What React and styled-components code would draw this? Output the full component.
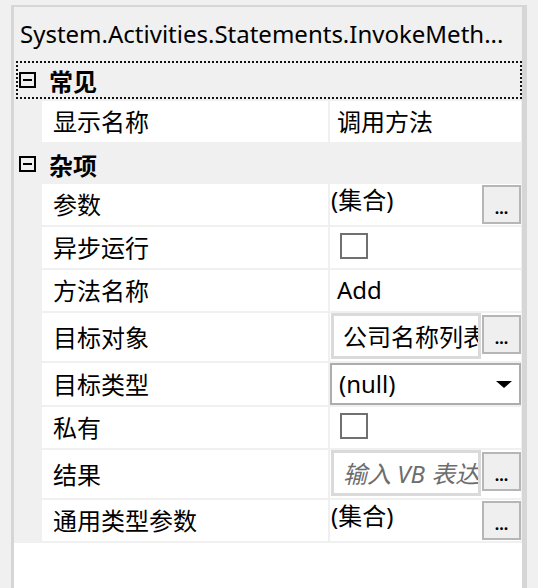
import React from "react";
import styled, { createGlobalStyle } from "styled-components";

const GlobalStyle = createGlobalStyle`
  html, body {
    margin: 0;
    height: 100%;
    background: #f0f0f0;
  }
  #root {
    height: 100%;
  }
`;

const FONT = `"Noto Sans", "Noto Sans CJK SC", sans-serif`;

const Page = styled.div`
  height: 100vh;
  box-sizing: border-box;
  padding: 5px 11px 0 11px;
  display: flex;
  font-family: ${FONT};
  color: #000;
`;

const Frame = styled.div`
  flex: 1;
  display: flex;
  flex-direction: column;
  border-left: 3px solid #d6d6d6;
  border-top: 2px solid #d6d6d6;
  border-right: 5px solid #d6d6d6;
  background: #fff;
  overflow: hidden;
`;

const Header = styled.div`
  height: 54px;
  flex: none;
  display: flex;
  align-items: center;
  padding-left: 6px;
  padding-bottom: 2px;
  box-sizing: border-box;
  background: #f0f0f0;
  font-size: 24px;
  white-space: nowrap;
  overflow: hidden;
`;

const Rows = styled.div`
  display: flex;
  flex-direction: column;
  background: #f0f0f0;
  padding-right: 1px;
`;

const CategoryRow = styled.div`
  box-sizing: border-box;
  height: ${(p) => (p.$focused ? "38px" : "40px")};
  margin: ${(p) => (p.$focused ? "0 -1px 2px 2px" : "0")};
  border: ${(p) => (p.$focused ? "2px dotted #111" : "none")};
  display: flex;
  align-items: center;
  gap: 13px;
  padding-left: ${(p) => (p.$focused ? "1px" : "5px")};
  font-size: 24px;
  font-weight: 700;
`;

const Toggle = styled.span`
  position: relative;
  box-sizing: border-box;
  width: 17px;
  height: 16px;
  border: 2px solid #000;
  flex: none;
  &::after {
    content: "";
    position: absolute;
    left: 2px;
    right: 2px;
    top: 5px;
    height: 2px;
    background: #000;
  }
`;

const PropRow = styled.div`
  display: flex;
  gap: 2px;
  margin-left: 28px;
  margin-bottom: 2px;
  min-height: ${(p) => (p.$tall ? "48px" : "41px")};
`;

const Label = styled.div`
  width: 286px;
  flex: none;
  background: #fff;
  display: flex;
  align-items: center;
  padding-left: 11px;
  padding-bottom: 2px;
  box-sizing: border-box;
  font-size: 24px;
`;

const Value = styled.div`
  flex: 1;
  min-width: 0;
  background: #fff;
  display: flex;
  align-items: ${(p) => (p.$top ? "flex-start" : "center")};
  padding-left: ${(p) => p.$pad ?? 7}px;
  padding-bottom: ${(p) => (p.$top ? 0 : 3)}px;
  box-sizing: border-box;
  font-size: 24px;
  gap: 1px;
`;

const ValueText = styled.span`
  flex: 1;
  white-space: nowrap;
  line-height: ${(p) => (p.$top ? "32px" : "normal")};
`;

const EllipsisButton = styled.div`
  box-sizing: border-box;
  width: 39px;
  height: 39px;
  margin-top: ${(p) => p.$offset ?? 1}px;
  flex: none;
  border: 2px solid #b6b6b6;
  background: #efefef;
  display: flex;
  align-items: flex-end;
  justify-content: center;
  font-size: 16px;
  font-weight: 700;
  line-height: 1;
  padding-bottom: 6px;
`;

const CheckBox = styled.span`
  box-sizing: border-box;
  width: 28px;
  height: 26px;
  border: 2px solid #707070;
  background: #fff;
`;

const TextBox = styled.div`
  box-sizing: border-box;
  flex: 1;
  min-width: 0;
  height: 46px;
  align-self: flex-start;
  border: 3px solid #dadada;
  background: #fff;
  display: flex;
  align-items: center;
  padding-left: 9px;
  padding-bottom: 2px;
  overflow: hidden;
  font-size: 24px;
  color: ${(p) => (p.$placeholder ? "#6d6d6d" : "#000")};
  font-style: ${(p) => (p.$placeholder ? "italic" : "normal")};
`;

const Clip = styled.span`
  display: block;
  flex: 1;
  min-width: 0;
  overflow: hidden;
  white-space: nowrap;
`;

const Combo = styled.div`
  box-sizing: border-box;
  flex: 1;
  height: 42px;
  align-self: flex-start;
  border: 2px solid #adadad;
  display: flex;
  align-items: center;
  justify-content: space-between;
  padding: 0 7px 2px 7px;
  font-size: 24px;
`;

const Arrow = styled.span`
  width: 0;
  height: 0;
  margin-top: 2px;
  border-left: 8px solid transparent;
  border-right: 8px solid transparent;
  border-top: 7px solid #000;
`;

const Filler = styled.div`
  flex: 1;
  background: #fff;
`;

const Category = ({ title, focused }) => (
  <CategoryRow $focused={focused}>
    <Toggle />
    <span>{title}</span>
  </CategoryRow>
);

const App = () => (
  <>
    <GlobalStyle />
    <Page>
      <Frame>
        <Header>System.Activities.Statements.InvokeMeth...</Header>
        <Rows>
          <Category title="常见" focused />
          <PropRow>
            <Label>显示名称</Label>
            <Value>
              <ValueText>调用方法</ValueText>
            </Value>
          </PropRow>
          <Category title="杂项" />
          <PropRow>
            <Label>参数</Label>
            <Value $top $pad={1}>
              <ValueText $top>(集合)</ValueText>
              <EllipsisButton>...</EllipsisButton>
            </Value>
          </PropRow>
          <PropRow>
            <Label>异步运行</Label>
            <Value $pad={10}>
              <CheckBox />
            </Value>
          </PropRow>
          <PropRow>
            <Label>方法名称</Label>
            <Value>
              <ValueText>Add</ValueText>
            </Value>
          </PropRow>
          <PropRow $tall>
            <Label>目标对象</Label>
            <Value $top $pad={1}>
              <TextBox>
                <Clip>公司名称列表</Clip>
              </TextBox>
              <EllipsisButton $offset={2}>...</EllipsisButton>
            </Value>
          </PropRow>
          <PropRow>
            <Label>目标类型</Label>
            <Value $top $pad={0}>
              <Combo>
                <span>(null)</span>
                <Arrow />
              </Combo>
            </Value>
          </PropRow>
          <PropRow>
            <Label>私有</Label>
            <Value $pad={10}>
              <CheckBox />
            </Value>
          </PropRow>
          <PropRow $tall>
            <Label>结果</Label>
            <Value $top $pad={1}>
              <TextBox $placeholder>
                <Clip>输入 VB 表达式</Clip>
              </TextBox>
              <EllipsisButton $offset={2}>...</EllipsisButton>
            </Value>
          </PropRow>
          <PropRow>
            <Label>通用类型参数</Label>
            <Value $top $pad={1}>
              <ValueText $top>(集合)</ValueText>
              <EllipsisButton>...</EllipsisButton>
            </Value>
          </PropRow>
        </Rows>
        <Filler />
      </Frame>
    </Page>
  </>
);

export default App;
